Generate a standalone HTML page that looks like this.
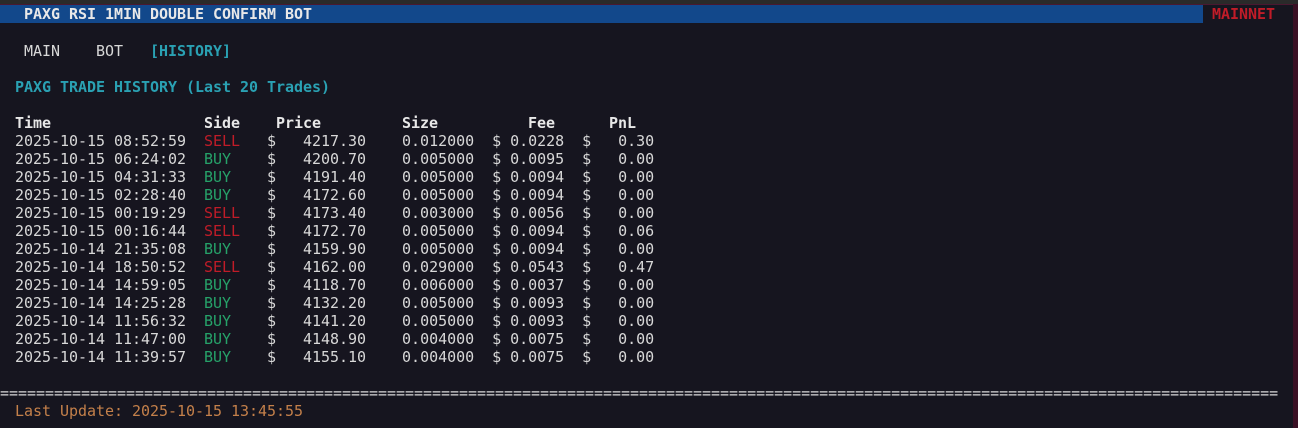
<!DOCTYPE html>
<html><head><meta charset="utf-8"><style>
html,body{margin:0;padding:0;}
body{width:1298px;height:428px;background:#16151f;overflow:hidden;position:relative;font-family:"DejaVu Sans Mono","Liberation Mono",monospace;font-size:15px;color:#d8d8d8;letter-spacing:-0.03px;}
.topstrip{position:absolute;left:0;top:0;width:1298px;height:4px;background:#2a2a2a;}
.topline{position:absolute;left:0;top:4px;width:1298px;height:1px;background:#4a1830;}
.rstrip{position:absolute;right:0;top:4px;width:5px;height:424px;background:#3a1024;}
.bar{position:absolute;left:0;top:5px;width:1203px;height:18px;background:#12488b;}
.r{position:absolute;left:6px;height:18px;line-height:18px;white-space:pre;margin-top:1px;}
b{font-weight:bold;}
.c{color:#2aa1b3;}
.red{color:#c01c28;}
.g{color:#26a269;}
.o{color:#c4804a;}
.w{color:#e8e8e8;}
</style></head><body>
<div class="topstrip"></div><div class="topline"></div><div class="rstrip"></div>
<div class="bar"></div>
<div class="r w" style="top:4px"><b>  PAXG RSI 1MIN DOUBLE CONFIRM BOT</b></div>
<div class="r red" style="top:4px;left:1212px"><b>MAINNET</b></div>
<div class="r" style="top:41px">  MAIN    BOT   <b class="c">[HISTORY]</b></div>
<div class="r c" style="top:77px"><b> PAXG TRADE HISTORY (Last 20 Trades)</b></div>
<div class="r w" style="top:113px"><b> Time                 Side    Price         Size          Fee      PnL</b></div>
<div class="r" style="top:131px"> 2025-10-15 08:52:59  <span class="red">SELL</span>   $   4217.30    0.012000  $ 0.0228  $   0.30</div>
<div class="r" style="top:149px"> 2025-10-15 06:24:02  <span class="g">BUY</span>    $   4200.70    0.005000  $ 0.0095  $   0.00</div>
<div class="r" style="top:167px"> 2025-10-15 04:31:33  <span class="g">BUY</span>    $   4191.40    0.005000  $ 0.0094  $   0.00</div>
<div class="r" style="top:185px"> 2025-10-15 02:28:40  <span class="g">BUY</span>    $   4172.60    0.005000  $ 0.0094  $   0.00</div>
<div class="r" style="top:203px"> 2025-10-15 00:19:29  <span class="red">SELL</span>   $   4173.40    0.003000  $ 0.0056  $   0.00</div>
<div class="r" style="top:221px"> 2025-10-15 00:16:44  <span class="red">SELL</span>   $   4172.70    0.005000  $ 0.0094  $   0.06</div>
<div class="r" style="top:239px"> 2025-10-14 21:35:08  <span class="g">BUY</span>    $   4159.90    0.005000  $ 0.0094  $   0.00</div>
<div class="r" style="top:257px"> 2025-10-14 18:50:52  <span class="red">SELL</span>   $   4162.00    0.029000  $ 0.0543  $   0.47</div>
<div class="r" style="top:275px"> 2025-10-14 14:59:05  <span class="g">BUY</span>    $   4118.70    0.006000  $ 0.0037  $   0.00</div>
<div class="r" style="top:293px"> 2025-10-14 14:25:28  <span class="g">BUY</span>    $   4132.20    0.005000  $ 0.0093  $   0.00</div>
<div class="r" style="top:311px"> 2025-10-14 11:56:32  <span class="g">BUY</span>    $   4141.20    0.005000  $ 0.0093  $   0.00</div>
<div class="r" style="top:329px"> 2025-10-14 11:47:00  <span class="g">BUY</span>    $   4148.90    0.004000  $ 0.0075  $   0.00</div>
<div class="r" style="top:347px"> 2025-10-14 11:39:57  <span class="g">BUY</span>    $   4155.10    0.004000  $ 0.0075  $   0.00</div>
<div class="r" style="top:383px;left:0">==============================================================================================================================================</div>
<div class="r o" style="top:401px"> Last Update: 2025-10-15 13:45:55</div>
</body></html>
